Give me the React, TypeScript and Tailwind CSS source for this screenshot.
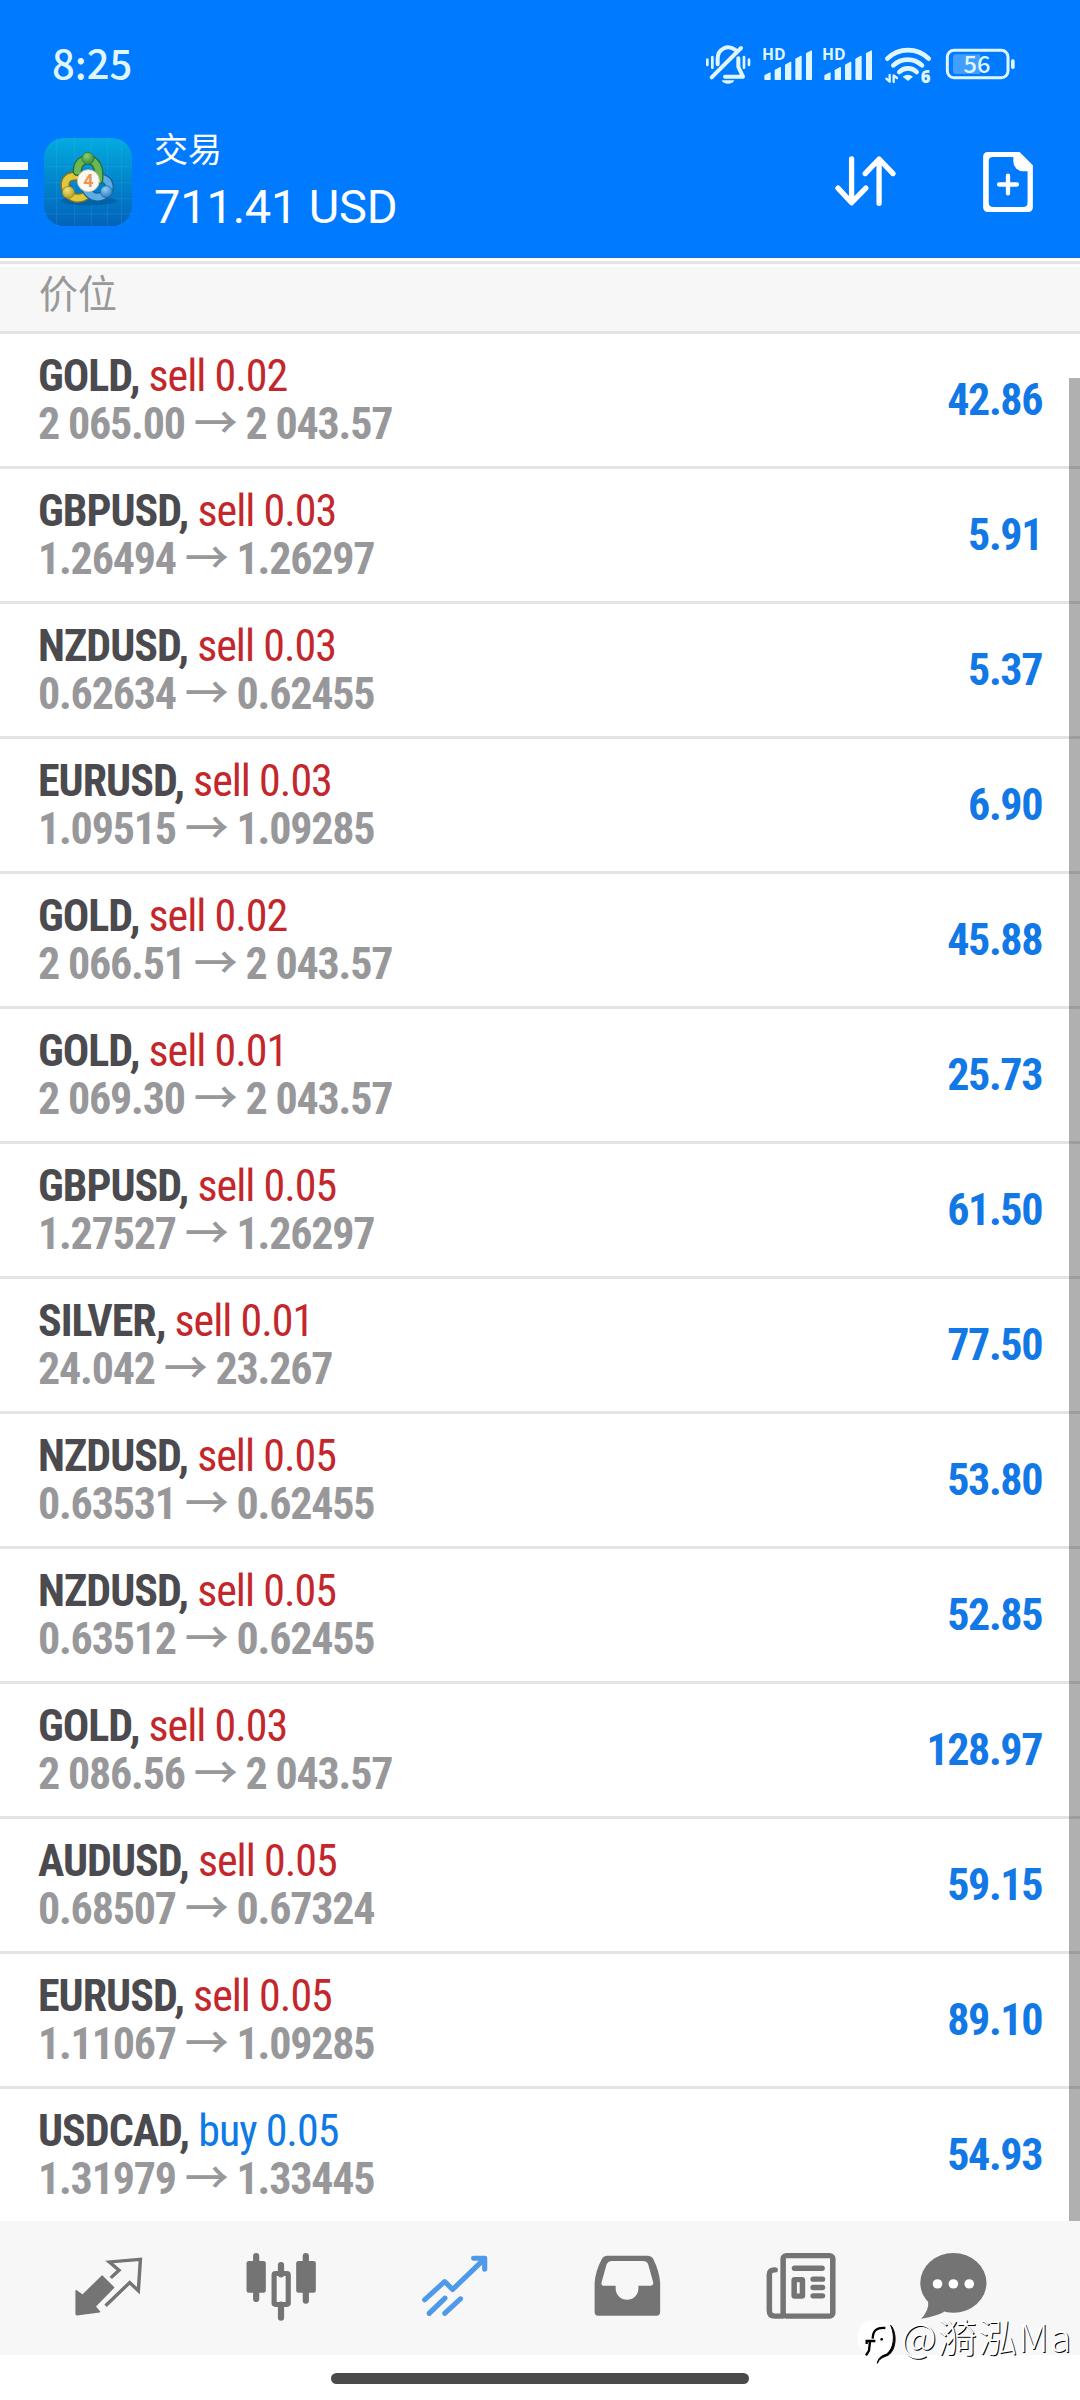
import type { ReactNode } from 'react';

interface Position {
  symbol: string;
  side: 'sell' | 'buy';
  volume: string;
  open: string;
  current: string;
  profit: string;
}

const positions: Position[] = [
  { symbol: 'GOLD', side: 'sell', volume: '0.02', open: '2 065.00', current: '2 043.57', profit: '42.86' },
  { symbol: 'GBPUSD', side: 'sell', volume: '0.03', open: '1.26494', current: '1.26297', profit: '5.91' },
  { symbol: 'NZDUSD', side: 'sell', volume: '0.03', open: '0.62634', current: '0.62455', profit: '5.37' },
  { symbol: 'EURUSD', side: 'sell', volume: '0.03', open: '1.09515', current: '1.09285', profit: '6.90' },
  { symbol: 'GOLD', side: 'sell', volume: '0.02', open: '2 066.51', current: '2 043.57', profit: '45.88' },
  { symbol: 'GOLD', side: 'sell', volume: '0.01', open: '2 069.30', current: '2 043.57', profit: '25.73' },
  { symbol: 'GBPUSD', side: 'sell', volume: '0.05', open: '1.27527', current: '1.26297', profit: '61.50' },
  { symbol: 'SILVER', side: 'sell', volume: '0.01', open: '24.042', current: '23.267', profit: '77.50' },
  { symbol: 'NZDUSD', side: 'sell', volume: '0.05', open: '0.63531', current: '0.62455', profit: '53.80' },
  { symbol: 'NZDUSD', side: 'sell', volume: '0.05', open: '0.63512', current: '0.62455', profit: '52.85' },
  { symbol: 'GOLD', side: 'sell', volume: '0.03', open: '2 086.56', current: '2 043.57', profit: '128.97' },
  { symbol: 'AUDUSD', side: 'sell', volume: '0.05', open: '0.68507', current: '0.67324', profit: '59.15' },
  { symbol: 'EURUSD', side: 'sell', volume: '0.05', open: '1.11067', current: '1.09285', profit: '89.10' },
  { symbol: 'USDCAD', side: 'buy', volume: '0.05', open: '1.31979', current: '1.33445', profit: '54.93' },
];

function MutedBell() {
  return (
    <svg className="w-[46px] h-10" viewBox="0 0 138 120" fill="none" stroke="currentColor" strokeLinecap="round" strokeLinejoin="round">
      <g strokeWidth="8">
        <path d="M7 44V60M22 36V68M117 36V68M132 44V60" />
      </g>
      <g strokeWidth="12">
        <path d="M38 58V42C38 10 68 -1 90 14" />
        <path d="M100 40V66L114 95H60" />
        <path d="M20 97L108 9" />
      </g>
      <path d="M50 106H88C84 120 54 120 50 106Z" fill="currentColor" stroke="none" />
    </svg>
  );
}

function Signal() {
  return (
    <svg className="w-[51px] h-10 overflow-visible" viewBox="0 0 153 120" fill="currentColor">
      <text x="0" y="45" fontSize="46" fontWeight="700" className="font-['Open_Sans',sans-serif]" textLength="71" lengthAdjust="spacingAndGlyphs">HD</text>
      <g stroke="currentColor" strokeWidth="4" strokeLinejoin="round">
        <path d="M9 92L24 84V103H9Z" />
        <path d="M40 76L55 68V103H40Z" />
        <path d="M71 60L86 52V103H71Z" />
        <path d="M102 42L117 34V103H102Z" />
        <path d="M134 26L148 18V103H134Z" />
      </g>
    </svg>
  );
}

function Wifi() {
  return (
    <svg className="w-12 h-10 overflow-visible" viewBox="0 0 144 120" fill="none" stroke="currentColor" strokeLinecap="round">
      <g strokeWidth="14">
        <path d="M10 41A88 88 0 0 1 134 41" />
        <path d="M28 61A62 62 0 0 1 114 61" />
        <path d="M46 81A36 36 0 0 1 98 81" />
      </g>
      <path d="M56 95Q71 84 87 95L72 108Z" fill="currentColor" stroke="none" />
      <path d="M17 90V110L7 101M29 111V91L39 99" strokeWidth="7" strokeLinejoin="round" />
      <text x="110" y="113" fontSize="50" fontWeight="800" fill="currentColor" stroke="none" className="font-['Open_Sans',sans-serif]">6</text>
    </svg>
  );
}

function Battery() {
  return (
    <svg className="w-[71px] h-10 overflow-visible" viewBox="0 0 213 120" fill="currentColor">
      <rect x="7" y="16" width="182" height="82" rx="20" fill="none" stroke="currentColor" strokeWidth="9" />
      <path d="M32 28H106V87H32Q24 87 24 79V36Q24 28 32 28Z" opacity="0.3" />
      <text x="96" y="84" fontSize="71" textAnchor="middle" className="font-['Noto_Sans_CJK_SC',sans-serif]" fontWeight="500">56</text>
      <rect x="198" y="43" width="11" height="29" rx="5" />
    </svg>
  );
}

function AppLogo() {
  return (
    <svg className="size-[88px]" viewBox="0 0 264 264">
      <defs>
        <linearGradient id="tile" x1="0" y1="0" x2="0" y2="1">
          <stop offset="0" stopColor="#03abdf" />
          <stop offset="0.5" stopColor="#0284cd" />
          <stop offset="1" stopColor="#0363b8" />
        </linearGradient>
        <radialGradient id="green" cx="0.4" cy="0.3" r="0.8">
          <stop offset="0" stopColor="#8fd06c" />
          <stop offset="1" stopColor="#22803a" />
        </radialGradient>
        <radialGradient id="yellow" cx="0.4" cy="0.3" r="0.8">
          <stop offset="0" stopColor="#f4e27a" />
          <stop offset="1" stopColor="#ad9418" />
        </radialGradient>
        <radialGradient id="blue" cx="0.4" cy="0.3" r="0.8">
          <stop offset="0" stopColor="#8fd0f5" />
          <stop offset="1" stopColor="#1d72bd" />
        </radialGradient>
      </defs>
      <rect width="264" height="264" rx="60" fill="url(#tile)" />
      <path d="M0 86H264M0 134H264M0 182H264M0 228H264M38 0V264M92 0V264M142 0V264M190 0V264M232 0V264" stroke="#5fc4f2" strokeOpacity="0.16" strokeWidth="3" />
      <ellipse cx="134" cy="188" rx="84" ry="14" fill="#034a86" opacity="0.45" />
      <g fill="none" strokeLinecap="round">
        <path d="M98 114C60 114 58 140 70 164C84 184 108 184 124 174" stroke="#7d7420" strokeWidth="28" />
        <path d="M98 114C60 114 58 140 70 164C84 184 108 184 124 174" stroke="#dfc83e" strokeWidth="20" />
        <path d="M172 120C200 126 200 150 188 166C168 184 144 180 128 158" stroke="#1c5f97" strokeWidth="28" />
        <path d="M172 120C200 126 200 150 188 166C168 184 144 180 128 158" stroke="#5aaee4" strokeWidth="20" />
        <path d="M100 100C100 76 114 66 132 64C154 66 168 86 164 126" stroke="#2c6d2c" strokeWidth="28" />
        <path d="M100 100C100 76 114 66 132 64C154 66 168 86 164 126" stroke="#69b853" strokeWidth="20" />
      </g>
      <circle cx="132" cy="61" r="18" fill="url(#green)" stroke="#2c6d2c" strokeWidth="2" />
      <circle cx="73" cy="163" r="18" fill="url(#yellow)" stroke="#8d7a12" strokeWidth="2" />
      <circle cx="187" cy="161" r="18" fill="url(#blue)" stroke="#1c5f97" strokeWidth="2" />
      <circle cx="133" cy="128" r="33" fill="#fbf7f2" stroke="#c9c4b0" strokeWidth="3" />
      <text x="133" y="147" fontSize="54" fontWeight="700" textAnchor="middle" fill="#f0934e" className="font-[Roboto,sans-serif]">4</text>
    </svg>
  );
}

function NavIcon({ children, active }: { children: ReactNode; active?: boolean }) {
  return (
    <button className={`flex flex-1 items-center justify-center pb-[3px] ${active ? 'text-[#4d9aea]' : 'text-[#747474]'}`}>
      <svg className="w-20 h-[77px] overflow-visible" viewBox="0 0 232 232" preserveAspectRatio="none" fill="none" stroke="currentColor" strokeLinejoin="round">
        {children}
      </svg>
    </button>
  );
}

export default function App() {
  return (
    <div className="relative flex flex-col w-[1080px] h-[2400px] overflow-hidden bg-white font-['Roboto_Condensed',Roboto,sans-serif]">
      <header className="flex flex-col h-[258px] bg-[#007aff] border-b border-[#1a6fd6] text-white shrink-0">
        {/* Status bar */}
        <div className="flex items-center h-[117px] pl-[52px] pr-16 pt-[13px] text-[#dff6ff]">
          <span className="mr-auto mb-[7px] text-[40px] leading-[52px] font-medium font-['Noto_Sans_CJK_SC',sans-serif]">8:25</span>
          <MutedBell />
          <div className="flex gap-[9px] ml-[11px] mr-[11px]">
            <Signal />
            <Signal />
          </div>
          <Wifi />
          <div className="ml-[13px]">
            <Battery />
          </div>
        </div>

        {/* Account */}
        <div className="flex items-center h-[129px]">
          <div className="flex flex-col gap-[9px] w-[28px] mr-4 mt-0.5">
            <span className="h-2 bg-white" />
            <span className="h-2 bg-white" />
            <span className="h-2 bg-white" />
          </div>
          <AppLogo />
          <div className="flex flex-col ml-[22px] mt-px">
            <span className="text-[34px] leading-10 font-['Noto_Sans_CJK_SC',sans-serif]">交易</span>
            <span className="mt-[9px] text-[47px] leading-[60px] font-[Roboto,sans-serif] tracking-[-0.2px]">711.41 USD</span>
          </div>
          <div className="flex items-center ml-auto pr-[46px] gap-[85px]">
            <svg className="w-[63px] h-[53px]" viewBox="0 0 190 160" fill="none" stroke="currentColor" strokeWidth="16" strokeLinecap="round" strokeLinejoin="round">
              <path d="M53 12V142M12 100L53 144L96 100" />
              <path d="M136 146V14M94 56L136 12L178 56" />
            </svg>
            <svg className="w-[52px] h-[62px]" viewBox="0 0 156 187" fill="currentColor">
              <path fillRule="evenodd" d="M18 3H113L153 43V169Q153 184 138 184H18Q3 184 3 169V18Q3 3 18 3ZM32 18H94V32A29 29 0 0 0 124 61H137V155Q137 169 123 169H34Q20 169 20 155V30Q20 18 32 18Z" />
              <path d="M78 74V128M51 101H105" stroke="currentColor" strokeWidth="13" strokeLinecap="round" />
            </svg>
          </div>
        </div>
      </header>

      <div className="h-[9px] border-y-[3px] border-white bg-[#e5e5e5] shrink-0" />

      <div className="flex items-center h-[67px] pl-[39px] bg-[#f7f7f7] border-b-[3px] border-[#e4e4e4] shrink-0">
        <span className="-mt-4 text-[39px] leading-[50px] text-[#999] font-['Noto_Sans_CJK_SC',sans-serif]">价位</span>
      </div>

      {/* Open positions */}
      <main className="relative h-[1887px] shrink-0">
        <div className="divide-y-[3px] divide-[#e4e4e4]">
          {positions.map((p, index) => (
            <div
              key={index}
              className="box-content flex items-center justify-between h-[132px] pl-[38px] pr-[38px] text-[44px] leading-[48px]"
            >
              <div>
                <div>
                  <span className="font-bold text-[#4a4a4f] tracking-[-1px]">{p.symbol}, </span>
                  <span className={`tracking-[-1px] ${p.side === 'sell' ? 'text-[#c3272b]' : 'text-[#0f7ae5]'}`}>
                    {p.side} {p.volume}
                  </span>
                </div>
                <div className="font-bold text-[#98989b] tracking-[-1.2px]">
                  {p.open}{' '}
                  <span className="font-medium leading-[0] font-['Noto_Sans_CJK_SC',sans-serif]">→</span>{' '}
                  {p.current}
                </div>
              </div>
              <span className="font-bold text-[#1278e6] tracking-[-1.4px]">{p.profit}</span>
            </div>
          ))}
        </div>
        <div className="absolute right-0 top-11 bottom-0 w-[11px] bg-black/31" />
      </main>

      <nav className="flex h-[134px] px-[22px] bg-[#f7f7f7] shrink-0">
        <NavIcon>
          <path d="M24 129L42 143L99 85L132 119L78 176L91 192L26 201L24 199Z" fill="currentColor" strokeWidth="5" />
          <path d="M124 90L148 67L120 42L210 34L204 129L179 104L109 174" strokeWidth="10" strokeLinejoin="miter" />
        </NavIcon>
        <NavIcon>
          <path d="M44 24V154M188 24V159M116 51V80M116 170V210" strokeWidth="18" strokeLinecap="round" />
          <rect x="16" y="39" width="56" height="96" rx="7" fill="currentColor" stroke="none" />
          <rect x="160" y="39" width="57" height="96" rx="7" fill="currentColor" stroke="none" />
          <rect x="96" y="77" width="41" height="93" rx="4" strokeWidth="15" />
        </NavIcon>
        <NavIcon active>
          <g strokeWidth="15" strokeLinecap="round">
            <path d="M31 156L89 101L112 125L202 35" />
            <path d="M173 31H205V64" />
            <path d="M44 197L90 151M89 197L135 153" />
          </g>
        </NavIcon>
        <NavIcon>
          <path
            fill="currentColor"
            stroke="none"
            fillRule="evenodd"
            d="M60 23H180Q189 23 194 31Q213 70 215 105V193Q215 204 204 204H36Q25 204 25 193V105Q27 70 47 31Q52 23 60 23ZM74 39H166Q176 39 180 48L195 104Q196 114 186 114H152V122A33 34 0 0 1 86 122V114H53Q43 114 45 104L60 48Q65 39 74 39Z"
          />
        </NavIcon>
        <NavIcon>
          <g strokeWidth="16" strokeLinecap="round">
            <rect x="70" y="23" width="144" height="182" rx="9" />
            <path d="M47 66Q30 65 30 80V188Q30 205 46 205H68" />
            <path d="M103 61H183M157 94H184M157 119H184M157 144H184" />
            <rect x="102" y="95" width="24" height="50" rx="2" />
          </g>
        </NavIcon>
        <NavIcon>
          <g stroke="none">
            <path d="M-32 213Q-8 190 -11 160L36 192Q12 206 -32 213Z" fill="currentColor" />
            <ellipse cx="62" cy="105" rx="96" ry="90" fill="currentColor" />
            <g fill="#fff">
              <circle cx="16" cy="108" r="14" />
              <circle cx="62" cy="108" r="14" />
              <circle cx="108" cy="108" r="14" />
            </g>
          </g>
        </NavIcon>
      </nav>

      <div className="flex flex-1 justify-center pt-[18px]">
        <div className="w-[418px] h-[11px] rounded-full bg-[#4a4a4a]" />
      </div>

      {/* Watermark */}
      <div className="absolute left-[856px] top-[2318px] flex items-start text-white whitespace-nowrap">
        <svg className="w-[42px] h-12" viewBox="18 24 126 144">
          <path d="M78 30C118 30 136 50 136 84C136 110 122 126 84 136C44 136 22 118 22 84C22 50 40 30 78 30Z" fill="#fff" />
          <path d="M106 54C80 52 69 60 68 86M50 102V93H76M60 94L57 122L48 136" fill="none" stroke="#000" strokeWidth="7" />
          <path d="M122 46C140 64 142 118 114 136C98 142 88 146 82 160C86 140 96 138 110 132C132 116 136 76 122 46Z" strokeWidth="3" stroke="#000" />
          <circle cx="95" cy="88" r="4" />
        </svg>
        <span className="ml-[3px] -mt-[5px] text-[39px] leading-[44px] font-light tracking-[1.2px] font-['Noto_Sans_CJK_SC',sans-serif] [text-shadow:1px_1px_0_#000]">
          @漪泓Ma
        </span>
      </div>
    </div>
  );
}
